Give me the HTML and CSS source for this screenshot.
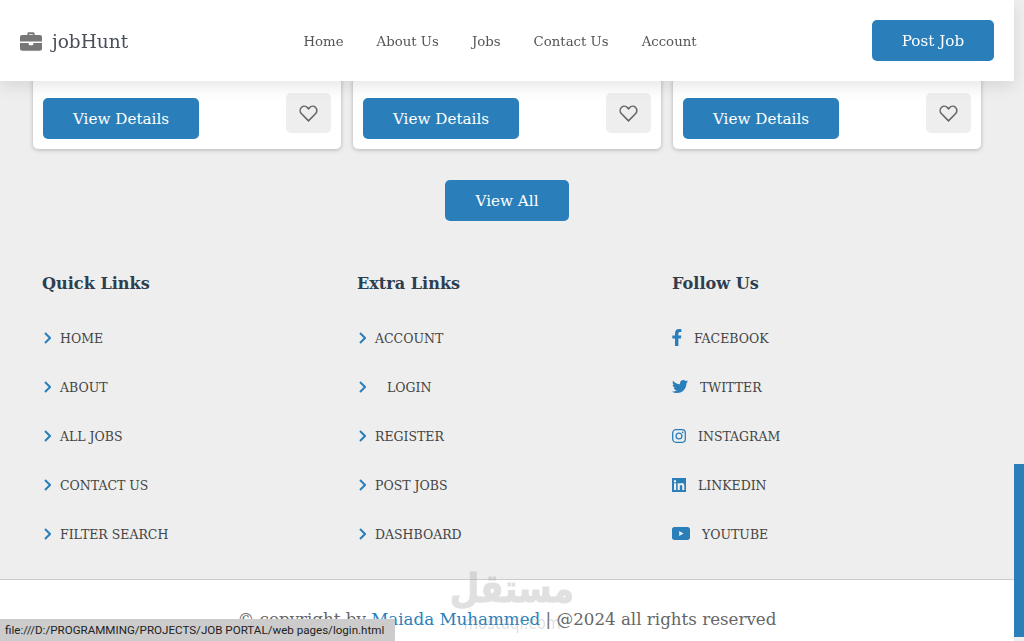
FILE: index.html
```html
<!DOCTYPE html>
<html lang="en">
<head>
    <meta charset="UTF-8">
    <title>jobHunt</title>
    <link rel="stylesheet" href="styles.css">
</head>
<body>
    <header class="topbar">
        <a class="logo" href="#">
            <svg class="logo-icon" viewBox="0 0 24 20"><path d="M8 3V1.6C8 .7 8.7 0 9.6 0h4.8c.9 0 1.6.7 1.6 1.6V3h5.5C23 3 24 4 24 5.2V10H0V5.2C0 4 1 3 2.5 3H8zm2-1v1h4V2h-4zM0 11.500h9.500V13c0 .6.4 1 1 1h3c.6 0 1-.4 1-1v-1.500H24v6.300C24 19 23 20 21.500 20h-19C1 20 0 19 0 17.800v-6.300z"/></svg>
            jobHunt
        </a>
        <nav class="nav">
            <a href="#">Home</a>
            <a href="#">About Us</a>
            <a href="#">Jobs</a>
            <a href="#">Contact Us</a>
            <a href="#">Account</a>
        </nav>
        <a class="btn btn-post" href="#">Post Job</a>
    </header>

    <main class="jobs">
        <div class="cards">
            <div class="card">
                <a class="btn" href="#">View Details</a>
                <button class="fav"><svg viewBox="0 0 24 22"><path d="M12 20.500 3 11.400C.6 9 .6 5.400 2.800 3.200c2.200-2.100 5.700-2 7.800.2L12 5l1.400-1.600c2.100-2.200 5.600-2.300 7.800-.2 2.200 2.200 2.200 5.800-.2 8.200z"/></svg></button>
            </div>
            <div class="card">
                <a class="btn" href="#">View Details</a>
                <button class="fav"><svg viewBox="0 0 24 22"><path d="M12 20.500 3 11.400C.6 9 .6 5.400 2.800 3.200c2.200-2.100 5.700-2 7.800.2L12 5l1.400-1.600c2.100-2.200 5.600-2.300 7.800-.2 2.200 2.200 2.200 5.800-.2 8.200z"/></svg></button>
            </div>
            <div class="card">
                <a class="btn" href="#">View Details</a>
                <button class="fav"><svg viewBox="0 0 24 22"><path d="M12 20.500 3 11.400C.6 9 .6 5.400 2.800 3.200c2.200-2.100 5.700-2 7.800.2L12 5l1.400-1.600c2.100-2.200 5.600-2.300 7.800-.2 2.200 2.200 2.200 5.800-.2 8.200z"/></svg></button>
            </div>
        </div>
        <div class="all-row"><a class="btn" href="#">View All</a></div>
    </main>

    <section class="links">
        <div class="col">
            <h3>Quick Links</h3>
            <a href="#"><svg class="chev" viewBox="0 0 9 12"><path d="M3 1 8 6 3 11"/></svg>HOME</a>
            <a href="#"><svg class="chev" viewBox="0 0 9 12"><path d="M3 1 8 6 3 11"/></svg>ABOUT</a>
            <a href="#"><svg class="chev" viewBox="0 0 9 12"><path d="M3 1 8 6 3 11"/></svg>ALL JOBS</a>
            <a href="#"><svg class="chev" viewBox="0 0 9 12"><path d="M3 1 8 6 3 11"/></svg>CONTACT US</a>
            <a href="#"><svg class="chev" viewBox="0 0 9 12"><path d="M3 1 8 6 3 11"/></svg>FILTER SEARCH</a>
        </div>
        <div class="col">
            <h3>Extra Links</h3>
            <a href="#"><svg class="chev" viewBox="0 0 9 12"><path d="M3 1 8 6 3 11"/></svg>ACCOUNT</a>
            <a class="login" href="#"><svg class="chev" viewBox="0 0 9 12"><path d="M3 1 8 6 3 11"/></svg>LOGIN</a>
            <a href="#"><svg class="chev" viewBox="0 0 9 12"><path d="M3 1 8 6 3 11"/></svg>REGISTER</a>
            <a href="#"><svg class="chev" viewBox="0 0 9 12"><path d="M3 1 8 6 3 11"/></svg>POST JOBS</a>
            <a href="#"><svg class="chev" viewBox="0 0 9 12"><path d="M3 1 8 6 3 11"/></svg>DASHBOARD</a>
        </div>
        <div class="col">
            <h3>Follow Us</h3>
            <a href="#"><svg class="social s-fb" viewBox="0 0 10 17"><path d="M3 17V9.500H.3V6.400H3V4.200C3 1.500 4.600 0 7 0c1.200 0 2.400.2 2.400.2v2.700H8.100c-1.300 0-1.700.8-1.700 1.600v1.900h3l-.5 3.100H6.400V17z"/></svg>FACEBOOK</a>
            <a href="#"><svg class="social s-tw" viewBox="0 0 16 13"><path d="M14.400 3.300v.4C14.400 8 11.100 13 5 13c-1.900 0-3.600-.5-5-1.500.3 0 .5.100.8.100 1.500 0 2.900-.5 4-1.400-1.400 0-2.600-1-3-2.300.2 0 .4.100.6.100.3 0 .6 0 .9-.1C1.800 7.600.7 6.300.7 4.700c.4.200.9.400 1.500.4C1.300 4.500.7 3.500.7 2.400c0-.6.200-1.200.4-1.700C2.800 2.800 5.200 4.100 8 4.300c0-.2-.1-.5-.1-.7C7.900 1.600 9.400 0 11.200 0c1 0 1.800.4 2.400 1 .7-.1 1.400-.4 2.100-.8-.2.700-.7 1.300-1.400 1.700.6-.1 1.200-.2 1.700-.5-.4.600-.9 1.200-1.600 1.900z"/></svg>TWITTER</a>
            <a href="#"><svg class="social s-ig" viewBox="0 0 14 14"><rect x=".7" y=".7" width="12.600" height="12.600" rx="3.200" fill="none" stroke="#2a7fba" stroke-width="1.300"/><circle cx="7" cy="7" r="2.900" fill="none" stroke="#2a7fba" stroke-width="1.300"/><circle cx="10.700" cy="3.300" r=".85"/></svg>INSTAGRAM</a>
            <a href="#"><svg class="social s-in" viewBox="0 0 14 14"><path fill-rule="evenodd" d="M0 0h14v14H0zM2 5.300V12h2.100V5.300zM3 2a1.200 1.200 0 1 0 0 2.400A1.200 1.200 0 0 0 3 2zm2.700 3.300V12h2.100V8.600c0-.9.200-1.700 1.300-1.700s1.100 1 1.100 1.800V12h2.100V8.300c0-1.800-.4-3.200-2.500-3.200-1 0-1.700.5-2 1.100V5.300z"/></svg>LINKEDIN</a>
            <a href="#"><svg class="social s-yt" viewBox="0 0 18 13"><path fill-rule="evenodd" d="M2.500 0h13C17 0 18 1 18 2.500v8c0 1.500-1 2.500-2.500 2.500h-13C1 13 0 12 0 10.500v-8C0 1 1 0 2.500 0zM7.200 4v5l4.300-2.500z"/></svg>YOUTUBE</a>
        </div>
    </section>

    <footer class="copy">
        <p>&copy; copyright by <a href="#">Maiada Muhammed</a> | @2024 all rights reserved</p>
    </footer>

    <!-- site watermark and browser chrome that were in the shot -->
    <div class="mark" dir="rtl">مستقل<small>mostaql.com</small></div>
    <div class="status">file:///D:/PROGRAMMING/PROJECTS/JOB PORTAL/web pages/login.html</div>
    <div class="scrollbar"><div class="thumb"></div></div>
</body>
</html>
```

FILE: styles.css
```css
html, body {
    height: 100%;
    overflow: hidden;
}

body {
    margin: 0;
    padding-right: 10px;
    font-family: "DejaVu Serif", serif;
    background-color: #eee;
    color: #444;
}

a {
    text-decoration: none;
    color: inherit;
}

.topbar {
    position: fixed;
    top: 0;
    left: 0;
    right: 10px;
    height: 81px;
    z-index: 5;
    display: flex;
    align-items: center;
    justify-content: space-between;
    padding: 0 20px;
    box-sizing: border-box;
    background-color: #fff;
    box-shadow: 0 5px 15px rgba(0, 0, 0, 0.1);
}

.logo {
    display: flex;
    align-items: center;
    gap: 10px;
    padding-top: 1px;
    font-size: 18.5px;
    color: #4a4f5c;
}

.logo-icon {
    width: 22px;
    height: 21px;
    fill: #777;
}

.nav {
    display: flex;
    gap: 33px;
    padding-top: 1px;
    font-size: 13.3px;
    color: #555;
}

.btn {
    display: inline-block;
    width: 156px;
    height: 41px;
    line-height: 43px;
    text-align: center;
    border-radius: 5px;
    background-color: #2a7fba;
    color: #fff;
    font-size: 15.2px;
}

.btn-post {
    width: 122px;
}

.jobs {
    padding: 70px 33px 0;
}

.cards {
    display: grid;
    grid-template-columns: repeat(3, 308px);
    gap: 12px;
}

.card {
    display: flex;
    justify-content: space-between;
    align-items: flex-start;
    padding: 23px 10px 0;
    height: 56px;
    background-color: #fff;
    border-radius: 5px;
    box-shadow: 0 1px 4px rgba(0, 0, 0, 0.25);
}

.card .btn {
    margin-top: 5px;
}

.fav {
    width: 45px;
    height: 40px;
    padding: 0;
    border: none;
    border-radius: 5px;
    background-color: #eee;
}

.fav svg {
    width: 19px;
    height: 17px;
    fill: none;
    stroke: #666;
    stroke-width: 2;
    display: block;
    margin: 0 auto;
}

.all-row {
    display: flex;
    justify-content: center;
    margin-top: 31px;
}

.all-row .btn {
    width: 124px;
}

.links {
    display: grid;
    grid-template-columns: repeat(3, 315px);
    padding: 50px 42px 0;
    height: 359px;
    box-sizing: border-box;
    border-bottom: 1px solid #ccc;
}

.col h3 {
    margin: 0 0 17px;
    font-size: 16.1px;
    line-height: 26px;
    color: #2c3e50;
}

.col a {
    display: flex;
    align-items: center;
    height: 49px;
    font-size: 12.5px;
    color: #444;
}

.chev {
    width: 9px;
    height: 12px;
    margin-right: 9px;
    margin-bottom: 2px;
    fill: none;
    stroke: #2a7fba;
    stroke-width: 2;
}

.col .login .chev {
    margin-right: 21px;
}

.social {
    margin-bottom: 2px;
    fill: #2a7fba;
}

.s-fb { width: 10px; height: 17px; margin-right: 12px; }
.s-tw { width: 16px; height: 13px; margin-right: 12px; }
.s-ig { width: 14px; height: 14px; margin-right: 12px; }
.s-in { width: 14px; height: 14px; margin-right: 12px; }
.s-yt { width: 18px; height: 13px; margin-right: 12px; }

.copy {
    background-color: #fff;
    height: 62px;
    text-align: center;
    font-size: 16.7px;
    color: #666;
}

.copy p {
    margin: 0;
    padding-top: 29px;
}

.copy a {
    color: #2a7fba;
}

.mark {
    position: fixed;
    left: 450px;
    top: 562px;
    width: 124px;
    text-align: center;
    font-family: "DejaVu Sans", sans-serif;
    font-weight: bold;
    font-size: 34px;
    line-height: 46px;
    color: #999;
    -webkit-text-stroke: 1px #999;
    opacity: 0.3;
    transform: scaleY(1.15);
    transform-origin: top;
}

.mark small {
    display: block;
    font-size: 15px;
    line-height: 14px;
    font-weight: normal;
    -webkit-text-stroke: 0;
}

.status {
    position: fixed;
    left: 0;
    bottom: 0;
    height: 22px;
    width: 395px;
    box-sizing: border-box;
    padding-left: 5px;
    line-height: 23px;
    background-color: #ccc;
    font-family: "Roboto", sans-serif;
    font-size: 11.6px;
    color: #222;
    white-space: nowrap;
}

.scrollbar {
    position: fixed;
    top: 0;
    right: 0;
    width: 10px;
    height: 100%;
    background-color: #eee;
}

.thumb {
    position: absolute;
    top: 464px;
    left: 0;
    width: 100%;
    height: 173px;
    background-color: #2a7fba;
}
```
